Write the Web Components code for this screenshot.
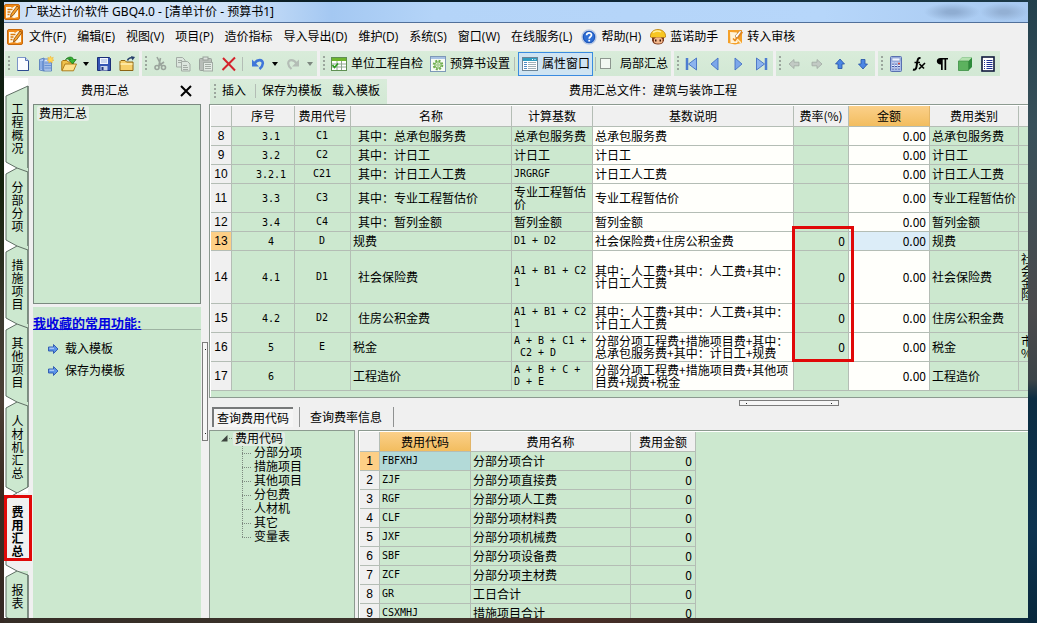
<!DOCTYPE html>
<html lang="zh-CN">
<head>
<meta charset="utf-8">
<title>广联达计价软件 GBQ4.0</title>
<style>
  html, body { height: 100%; }
  body {
    margin: 0; box-sizing: border-box; padding: 2px 9px 5px 4px; overflow: hidden;
    font: 12px/16px "Open Sans", "Noto Sans CJK SC", sans-serif; color: #000;
    background:
      linear-gradient(180deg, #0b1a14 0%, #16240e 30%, #3d3a30 52%, #4c4036 64%, #3a2a20 80%, #352a24 100%) 0 0 / 4px 100% no-repeat,
      linear-gradient(180deg, #22404c 0%, #38505a 20%, #4b4a4c 50%, #3c4448 61%, #0b2c42 64%, #0d3350 85%, #08283c 100%) 100% 0 / 9px 100% no-repeat,
      linear-gradient(90deg, #0a1a16, #0c2230 50%, #1c3a48) 0 0 / 100% 2px no-repeat,
      linear-gradient(90deg, #352d26, #3c342c 40%, #4a2e26 55%, #352c28 70%, #0b2a3e);
  }
</style>
</head>
<body>
<app-window></app-window>
<script>
const ICONS = {
  app: '<rect x=".5" y=".5" width="15" height="15" rx="1.5" fill="#f08a18" stroke="#c8690a"/><path d="M2 3h5l1 1 3-2 3 1v10l-4 1-3-1-5 1z" fill="#fff8e6"/><path d="M3.500 5.500h5M3.500 8h3M3.500 10.500h2" stroke="#d8780c" stroke-width="1.300"/><path d="M13 2 7 10l-.5 3 2.500-1.500L15 3.500z" fill="#f6a22c" stroke="#8a4200" stroke-width=".8"/>',
  help: '<circle cx="8" cy="8" r="7" fill="#2f6fd6" stroke="#b9c8e2" stroke-width="1.400"/><circle cx="8" cy="8" r="5.600" fill="none" stroke="#1b4fae" stroke-width=".8"/><path d="M5.600 6.300c0-3.300 4.900-3.100 4.900-.2 0 1.700-2.300 1.700-2.300 3.600" fill="none" stroke="#fff" stroke-width="1.700"/><rect x="7.300" y="10.800" width="1.800" height="1.700" fill="#fff"/>',
  kid: '<path d="M.5 8C0 3 4 .5 8 .5S16 3 15.500 8c-1 1.500-14 1.500-15 0z" fill="#f7c622" stroke="#b87c08" stroke-width=".8"/><path d="M3 3.500C5 1.500 9 1.500 11 3" stroke="#fff0a0" stroke-width="1.500" fill="none"/><path d="M2 8.500h12v3c-1 3-3 4-6 4s-5-1-6-4z" fill="#7b3a1c"/><path d="M4 10l2-1.500h5l1.500 2v2.500c-1 2-7.500 2-8.500 0z" fill="#f5b98c"/><rect x="5" y="10.500" width="1.500" height="2" fill="#401808"/><rect x="9.500" y="10.500" width="1.500" height="2" fill="#401808"/>',
  audit: '<path d="M1 1h14v13l-7 1.500L1 14z" fill="#f5a028"/><path d="M3 3l7 .5v3l-2 2.500 3 3-1 2H3.500z" fill="#fff3d8"/><path d="M6 9.500l2 2L15.500 3" stroke="#e8881c" stroke-width="1.600" fill="none"/><path d="M8 7l5-5.500 1.500 1L10 9z" fill="#fff" stroke="#a86820" stroke-width=".6"/><path d="m10 10 4 4" stroke="#fff0cc" stroke-width="1.400"/>',
  newdoc: '<path d="M2.500 1.500h8l3 3v10h-11z" fill="#fbfdff" stroke="#7c94c8"/><path d="M10.500 1.500v3h3" fill="#c6d6f0" stroke="#5674b4"/><path d="M13.500 5v9.500h-11" fill="none" stroke="#2e4c90"/>',
  building: '<path d="M1.500 3.500 6 2v13l-4.500-1z" fill="#a9c6f2" stroke="#4a72b8" stroke-width=".8"/><path d="M6 3h7.500v12H6z" fill="#d6e6fb" stroke="#4a72b8" stroke-width=".8"/><path d="M8 5v9M10 5v9M12 5v9M6.500 7h7M6.500 9.500h7M6.500 12h7M3 5v8M4.500 5v9" stroke="#5b86ce" stroke-width=".8"/><path d="m12.500 0 .8 2 2-.7-.8 2 1.500 1-2 .6.3 2-1.800-1.200-1.800 1.200.3-2-2-.6 1.600-1-.8-2 2 .7z" fill="#ffd659" stroke="#f0a818" stroke-width=".4"/>',
  open: '<path d="M.8 14.500V5.500l1-1h4l1.500 1.500h5v2" fill="#f0c24c" stroke="#a87410"/><path d="M1 14.800 4 8h11.500l-3 6.800z" fill="#ffe28c" stroke="#a87410" stroke-width=".9"/><path d="M4.500 3.500C7 .5 11.500 0 12.500 3.500h2.700L11.500 8 7.500 3.500h2.200C8.800 2.500 6.500 2.500 4.500 3.500z" fill="#37b534" stroke="#167012" stroke-width=".7"/>',
  save: '<path d="M1.500 1.500h12l1 1v12h-13z" fill="#3454b4" stroke="#1b2e78"/><rect x="4" y="2" width="8" height="6" fill="#f2f6ff"/><path d="M5 4h6M5 6h6" stroke="#9fb2dc"/><rect x="4.500" y="10" width="7" height="4.500" fill="#c9d4ec"/><rect x="5.500" y="11" width="2" height="3" fill="#20357e"/>',
  saveas: '<path d="M1 14.500v-9l1-1h4l1.500 1.500H14v8.500z" fill="#f7cf68" stroke="#8c6414"/><path d="M1.500 8h12" stroke="#ffefb4" stroke-width="1.500"/><path d="M8.500 4.500C9 2.500 11 1.500 13 2" fill="none" stroke="#28406c" stroke-width="1.500"/><path d="m12 0 4 1-2.500 3.500z" fill="#28406c"/>',
  cut: '<g fill="none" stroke="#9aa49c" stroke-width="1.600"><path d="M5 1l4.500 9M8.500 2 7 9"/><circle cx="5" cy="11.500" r="2"/><circle cx="11.500" cy="11.500" r="2"/><path d="M12 6 6.500 10"/></g>',
  copy: '<g fill="#dce6de" stroke="#a3aca5"><path d="M1.500 1.500h6l2.500 2.500v7H1.500z"/><path d="M6.500 5.500h6l2.500 2.500v7H6.500z"/><path d="M3 4.500h4M3 6.500h3M8 9.500h4M8 11.500h5M8 13.500h5" fill="none"/></g>',
  paste: '<rect x="1.500" y="2.500" width="12" height="12" rx="1" fill="#b8beb9" stroke="#9aa29c"/><rect x="5" y="1" width="5" height="3" fill="#dde3de" stroke="#979f99"/><rect x="5.500" y="6.500" width="9" height="8.500" fill="#e3eae4" stroke="#a3aca5"/><path d="M7 8.500h6M7 10.500h6M7 12.500h6" stroke="#a3aca5"/>',
  del: '<path d="m2 2 12 12.500M14 1.500 1.500 14" fill="none" stroke="#d4232c" stroke-width="2"/>',
  undo: '<path d="M4.500 7.500C7 3 13 3 12.800 7.500c-.1 2.500-1.500 4-3.300 5.500" fill="none" stroke="#3f76da" stroke-width="2.600"/><path d="M2 3.500v7h7z" fill="#3f76da"/>',
  redo: '<path d="M11.500 7.500C9 3 3 3 3.200 7.500c.1 2.500 1.500 4 3.300 5.500" fill="none" stroke="#b4bdb6" stroke-width="2.200"/><path d="M14 3.500v7H7z" fill="#b4bdb6"/>',
  check: '<rect x=".5" y="1.500" width="15" height="13" fill="#fff" stroke="#5f8f52"/><rect x="1" y="2" width="14" height="3" fill="#6fb62e"/><path d="M1 8h14M1 11h14M6 5v9M10.500 5v9" stroke="#8fa890"/><path d="m1.500 9 2 2.500 3.500-4" fill="none" stroke="#2b9c1c" stroke-width="1.600"/>',
  gear: '<rect x=".5" y=".5" width="15" height="15" fill="#f7fbf4" stroke="#7d98b8"/><path d="M1 2h14" stroke="#a8c2e4" stroke-width="2"/><circle cx="8" cy="9" r="4.300" fill="none" stroke="#6fae4e" stroke-width="2" stroke-dasharray="2 1.380"/><circle cx="8" cy="9" r="3.200" fill="#dff0d2" stroke="#6fae4e"/><circle cx="8" cy="9" r="1.200" fill="#fff" stroke="#6fae4e" stroke-width=".8"/>',
  props: '<rect x=".5" y="1.500" width="15" height="13" fill="#fff" stroke="#6c8496"/><rect x="1" y="2" width="14" height="3" fill="#2f9cc0"/><path d="M10 3.500h1M12.500 3.500h1" stroke="#fff"/><path d="M2 6.500h3M2 8.500h3M2 10.500h3M2 12.500h3" stroke="#4e8cc4"/><path d="M6 6.500h8M6 8.500h8M6 10.500h8M6 12.500h8" stroke="#9fb0b8"/>',
  first: '<path d="M3 2v12" stroke="#4e7ed0" stroke-width="2.500"/><path d="M12.500 2v12L4.500 8z" fill="#8db4ee" stroke="#4470c4" stroke-width=".9"/>',
  prev: '<path d="M11 2v12L4 8z" fill="#7ca7ea" stroke="#4470c4" stroke-width=".9"/>',
  next: '<path d="M5 2v12l7-6z" fill="#7ca7ea" stroke="#4470c4" stroke-width=".9"/>',
  last: '<path d="M13 2v12" stroke="#4e7ed0" stroke-width="2.500"/><path d="M3.500 2v12l8-6z" fill="#8db4ee" stroke="#4470c4" stroke-width=".9"/>',
  left: '<path d="M3 8l5-4.500v2.700h5v3.600H8v2.700z" fill="#c2cac4" stroke="#a0a8a2" stroke-width=".8"/>',
  right: '<path d="M13 8 8 3.500v2.700H3v3.600h5v2.700z" fill="#c2cac4" stroke="#a0a8a2" stroke-width=".8"/>',
  up: '<path d="M8 3l4.500 5H10v4.500H6V8H3.500z" fill="#4b86e4" stroke="#2450a4" stroke-width=".8"/>',
  down: '<path d="M8 13 3.500 8H6V3.500h4V8h2.500z" fill="#4b86e4" stroke="#2450a4" stroke-width=".8"/>',
  calc: '<rect x="2.500" y=".5" width="11" height="15" rx="1" fill="#a9bce8" stroke="#5870b0"/><rect x="4" y="2" width="8" height="3" fill="#eef4ff" stroke="#6a80bc" stroke-width=".6"/><path d="M4 7.500h8M4 10h8M4 12.500h8" stroke="#fff" stroke-width="1.500" stroke-dasharray="2 1"/><path d="M4 8h8M4 10.500h8M4 13h8" stroke="#4258a8" stroke-width="1" stroke-dasharray="2 1"/><path d="M10 7.500h2" stroke="#d4483c" stroke-width="1.500"/>',
  fx: '<path d="M9.500 2.500C7 1 6.500 4 6 7.500 5.500 12 5 14.500 2 13.500" fill="none" stroke="#000" stroke-width="2"/><path d="M3.500 6.500h5.500" stroke="#000" stroke-width="1.500"/><path d="m8.500 8 4.500 4.500M14 7l-6 6" stroke="#000" stroke-width="1.600"/>',
  para: '<path d="M14 2H6.500C1.500 2 1.500 8.500 7 8.500V14h1.700V3.500h1.800V14h1.700V3.500H14z" fill="#000"/>',
  cube: '<path d="M1.500 5 5 1.500h10V11l-3.500 3.500h-10z" fill="#2d8a3a"/><path d="M1.500 5 5 1.500h10L11.500 5z" fill="#b4e2b0"/><path d="M1.500 5h10v9.500h-10z" fill="#5cb25e" stroke="#3b8c42" stroke-width=".6"/>',
  list: '<rect x="2" y="1" width="12" height="14" fill="#fff" stroke="#111a3c" stroke-width="1.600"/><path d="M4 4.500h1M4 6.500h1M4 8.500h1M4 10.500h1M4 12.500h1" stroke="#1d2f90"/><path d="M6.500 4.500h6M6.500 6.500h6M6.500 8.500h6M6.500 10.500h6M6.500 12.500h6" stroke="#1d2f90"/>',
  go: '<path d="M3.500 6h5V3.500L13 8l-4.500 4.500V10h-5z" fill="#5b93e8" stroke="#2a55ae" stroke-width=".9"/><path d="M4.500 7.200H9" stroke="#c6dcfb"/>',
  close: '<path d="m3 3 10 10M13 3 3 13" stroke="#000" stroke-width="2" fill="none"/>'
};

/* Creates an element class whose shadow root is cloned from the given markup. */
function define(name, markup, setup) {
  const t = document.createElement('template');
  t.innerHTML = markup;
  customElements.define(name, class extends HTMLElement {
    constructor() { super(); this.attachShadow({ mode: 'open' }).append(t.content.cloneNode(true)); }
    connectedCallback() { if (setup) setup(this, this.shadowRoot); }
  });
}

define('ui-icon', `<style>:host{display:block;flex:none;width:16px;height:16px}svg{display:block;width:100%;height:100%}</style>
  <svg viewBox="0 0 16 16" aria-hidden="true"></svg>`,
  (el, r) => { r.querySelector('svg').innerHTML = ICONS[el.getAttribute('name')]; });

define('tool-button', `<style>
  :host{display:block;flex:none}
  button{display:flex;align-items:center;justify-content:center;gap:4px;box-sizing:border-box;height:24px;min-width:23px;margin:0;padding:0;border:0;background:none;font:inherit;color:inherit;white-space:nowrap}
  :host([text]) button{padding:0 2px 0 5px}
  :host([pressed]) button{border:1px solid #3a8be0;background:#cfe4f2;padding:0 2px 0 3px}
  </style><button type="button"><slot></slot></button>`,
  (el, r) => { const l = el.getAttribute('label'); if (l) r.querySelector('button').setAttribute('aria-label', l); });

define('tool-arrow', `<style>:host{display:block;flex:none}
  button{display:grid;place-items:center;width:12px;height:24px;padding:0;border:0;background:none;color:#000}
  :host([off]) button{color:#7d877f}
  i{border:3px solid transparent;border-top:4px solid;border-top-color:currentColor;border-bottom:0}</style>
  <button type="button" aria-label="更多"><i></i></button>`);

define('tool-sep', `<style>:host{display:block;flex:none;width:1px;height:14px;margin:0 3px 0 2px;background:#b3bdb5}</style>`);

define('tool-group', `<style>
  :host{display:flex;align-items:center;flex:none;height:25px;padding:0 1px 0 3px;background:linear-gradient(#d9ecda,#d2e8d4)}
  i{width:2px;height:15px;margin-right:1px;background:repeating-linear-gradient(#9ba69d 0 2px,transparent 2px 4px)}
  </style><i></i><slot></slot>`);

define('title-bar', `<style>
  :host{display:flex;align-items:center;gap:5px;box-sizing:border-box;height:21px;border-bottom:1px solid #51709a;
   font-family:"Noto Sans","Noto Sans CJK SC",sans-serif;
   background:radial-gradient(ellipse 28px 9px at 948px 10px,#8fadd2 20%,transparent),radial-gradient(ellipse 24px 9px at 1000px 10px,#93b0d4 20%,transparent),
   linear-gradient(90deg,#c3daf4 0,#dce9f8 5%,#cfe2f8 22%,#a4c8f2 32%,#b4d4f8 42%,#b6d6fa 80%,#a8c9f0)}
  h1{margin:0;font:inherit;white-space:pre}
  </style><ui-icon name="app"></ui-icon><h1>广联达计价软件 GBQ4.0 - [清单计价 - 预算书1]</h1>`);

define('menu-bar', `<style>
  :host{display:flex;align-items:center;gap:11px;height:28px;padding-left:3px;white-space:nowrap}
  button{display:flex;align-items:center;gap:4px;padding:0;border:0;background:none;font:inherit;color:inherit}
  ui-icon{margin-right:-5px}
  button ui-icon{margin-right:0}
  button:has(ui-icon){margin-left:-2px}
  </style>
  <ui-icon name="app"></ui-icon><button>文件(F)</button><button>编辑(E)</button><button>视图(V)</button><button>项目(P)</button>
  <button>造价指标</button><button>导入导出(D)</button><button>维护(D)</button><button>系统(S)</button><button>窗口(W)</button><button>在线服务(L)</button>
  <button><ui-icon name="help"></ui-icon>帮助(H)</button><button><ui-icon name="kid"></ui-icon>蓝诺助手</button><button><ui-icon name="audit"></ui-icon>转入审核</button>`);

const ib = (n, l) => `<tool-button label="${l}"><ui-icon name="${n}"></ui-icon></tool-button>`;
define('tool-bar', `<style>
  :host{display:flex;gap:3px;height:27px;padding-left:1px}
  label{display:flex;align-items:center;gap:9px;padding-right:2px;white-space:nowrap}
  input{appearance:none;width:11px;height:11px;margin:0 0 0 1px;border:1px solid #8d968f;background:#f2f8f2}
  </style>
  <tool-group>${ib('newdoc','新建')}${ib('building','新建项目')}${ib('open','打开')}<tool-arrow></tool-arrow>${ib('save','保存')}${ib('saveas','另存')}</tool-group>
  <tool-group>${ib('cut','剪切')}${ib('copy','复制')}${ib('paste','粘贴')}${ib('del','删除')}<tool-sep></tool-sep>${ib('undo','撤销')}<tool-arrow></tool-arrow>${ib('redo','恢复')}<tool-arrow off></tool-arrow></tool-group>
  <tool-group><tool-button text><ui-icon name="check"></ui-icon>单位工程自检</tool-button><tool-button text><ui-icon name="gear"></ui-icon>预算书设置</tool-button><tool-sep></tool-sep>
   <tool-button pressed><ui-icon name="props"></ui-icon>属性窗口</tool-button><tool-sep></tool-sep><label><input type="checkbox">局部汇总</label></tool-group>
  <tool-group>${ib('first','首条')}${ib('prev','上一条')}${ib('next','下一条')}${ib('last','末条')}</tool-group>
  <tool-group>${ib('left','升级')}${ib('right','降级')}${ib('up','上移')}${ib('down','下移')}</tool-group>
  <tool-group>${ib('calc','计算器')}${ib('fx','公式')}${ib('para','段落')}${ib('cube','图元')}${ib('list','列表')}</tool-group>`);

define('side-tab', `<style>
  :host{display:block;flex:none;position:relative;width:23px}
  svg{position:absolute;inset:0;overflow:visible}
  button{position:relative;display:grid;place-items:center;width:100%;height:100%;padding:0;border:0;background:none;font:inherit;line-height:13px;color:inherit}
  span{width:12px;word-break:break-all}
  :host([active]) span{font-weight:700}
  </style><svg width="23" aria-hidden="true"></svg><button type="button"><span><slot></slot></span></button>`,
  (el, r) => {
    const h = 26 + 13 * el.textContent.length, svg = r.querySelector('svg');
    el.style.height = h + 'px';
    svg.setAttribute('height', h);
    const on = el.hasAttribute('active'), first = el.hasAttribute('first'), end = el.hasAttribute('end');
    const fill = on ? '#f0f0f0' : '#cce8cf';
    const top = first ? '0,6 22,-4' : '0,6 11,0 22,0';
    const bottom = end ? `22,${h - 6} 11,${h} 0,${h - 6}` : `22,${h} 11,${h} 0,${h - 6}`;
    svg.innerHTML = `<polygon points="${top} ${bottom}" fill="${fill}"/>
      <polyline points="${end ? `22,${h - 6} ` : ''}11,${h} 0,${h - 6} 0,6 ${first ? '22,-4' : '11,0'}" fill="none" stroke="#5f6f64"/>
      ${first || on ? '' : '<path d="M11 0l11 4" stroke="#5f6f64"/>'}
      ${on ? '' : `<path d="M22 ${first ? -4 : 4}V${end ? h - 6 : h + 4}" stroke="#5f6f64" stroke-width="1.500"/>`}`;
  });

define('side-tabs', `<style>
  :host{display:flex;flex-direction:column;box-sizing:border-box;width:28px;padding:12px 0 0 2px;overflow:hidden;background:linear-gradient(90deg,#fff 24px,#f0f0f0 24px)}
  .wrap{position:relative;width:23px}
  .mark{position:absolute;left:-2px;top:2px;right:-3px;bottom:10px;border:3px solid #e00808;pointer-events:none}
  </style>
  <side-tab first>工程概况</side-tab><side-tab>分部分项</side-tab><side-tab>措施项目</side-tab><side-tab>其他项目</side-tab><side-tab end>人材机汇总</side-tab>
  <div class="wrap"><side-tab active>费用汇总</side-tab><div class="mark"></div></div><side-tab>报表</side-tab>`);

define('side-panel', `<style>
  :host{display:flex;flex-direction:column;min-height:0}
  header{display:flex;align-items:center;height:26px;padding-right:7px;flex:none}
  h2{flex:1;margin:0;font:inherit;text-align:center}
  button{padding:0;border:0;background:none}
  .tree{box-sizing:border-box;flex:none;height:200px;margin-left:1px;border:1px solid #7b8a80;background:#cce8cf;padding:1px 3px}
  .tree span{display:inline-block;padding:0 2px;background:#e6efe7;border-radius:2px;line-height:15px}
  .fav{flex:1;margin:3px 0 0 1px;background:#cce8cf;overflow:hidden}
  h3{margin:8px 0 8px;height:14px;border-bottom:1px solid #9db3a2;font:bold 13px/18px "Liberation Sans","Noto Sans CJK SC",sans-serif}
  h3 a{color:#0404e0;text-decoration:underline}
  .fav ul{list-style:none;margin:0;padding:0 0 0 12px}
  li a{display:flex;align-items:center;gap:4px;height:22px;color:#000;text-decoration:none}
  </style>
  <header><h2>费用汇总</h2><button type="button" aria-label="关闭"><ui-icon name="close"></ui-icon></button></header>
  <div class="tree"><span>费用汇总</span></div>
  <div class="fav"><h3><a href="#fav">我收藏的常用功能:</a></h3>
  <ul><li><a href="#load"><ui-icon name="go"></ui-icon>载入模板</a></li><li><a href="#save"><ui-icon name="go"></ui-icon>保存为模板</a></li></ul></div>`);

define('split-grip', `<style>
  :host{display:flex;flex-direction:column;justify-content:space-between;align-items:center;box-sizing:border-box;border:1px solid #7c7c7c;padding:6px 0;background:#f6f6f6}
  :host([wide]){flex-direction:row;padding:0 6px}
  i{width:1px;height:1px;background:#222}
  </style><i></i><i></i>`);

const TABLE_CSS = `
  table{border-collapse:separate;border-spacing:0;table-layout:fixed}
  th,td{box-sizing:border-box;padding:0 3px 0 2px;border:solid #b4bdb5;border-width:0 1px 1px 0;font-weight:400;line-height:12px;text-align:left;white-space:nowrap;overflow:hidden}
  td{background:#cce8cf}
  thead th{height:21px;padding:0;text-align:center;background:#f0f0f0}
  tbody th{padding:0;text-align:center;background:#f0f0f0;font-family:"Liberation Sans",sans-serif}
  thead th.on{background:linear-gradient(#fbd08a,#f2bd5f);border-right-color:#e2b568}
  tbody th.on{background:#fdcf86}
  .c{text-align:center}.r{text-align:right}
  .m{font:10px/12px "DejaVu Sans Mono",monospace}`;

/* Row fields: number, index, code, name, basis, description, rate, category, extra, height */
const ROWS = [
  [8,'3.1','C1','\u3000其中：总承包服务费','总承包服务费','总承包服务费','','总承包服务费','',19],
  [9,'3.2','C2','\u3000其中：计日工','计日工','计日工','','计日工','',19],
  [10,'3.2.1','C21','\u3000其中：计日工人工费','JRGRGF','计日工人工费','','计日工人工费','',19],
  [11,'3.3','C3','\u3000其中：专业工程暂估价','专业工程暂估<br>价','专业工程暂估价','','专业工程暂估价','',29],
  [12,'3.4','C4','\u3000其中：暂列金额','暂列金额','暂列金额','','暂列金额','',19],
  [13,'4','D','规费','D1 + D2','社会保险费+住房公积金费','0','规费','',19],
  [14,'4.1','D1','\u3000社会保险费','A1 + B1 + C2<br>1','其中：人工费+其中：人工费+其中：<br>计日工人工费','0','社会保险费','社<br>会<br>金<br>险',53],
  [15,'4.2','D2','\u3000住房公积金费','A1 + B1 + C2<br>1','其中：人工费+其中：人工费+其中：<br>计日工人工费','0','住房公积金费','',29],
  [16,'5','E','税金','A + B + C1 +<br>&nbsp;C2 + D','分部分项工程费+措施项目费+其中：<br>总承包服务费+其中：计日工+规费','0','税金','市<br>%',29],
  [17,'6','','工程造价','A + B + C +<br>D + E','分部分项工程费+措施项目费+其他项<br>目费+规费+税金','','工程造价','',29]
];
define('cost-grid', `<style>
  :host{display:block;position:relative;box-sizing:border-box;height:294px;border:1px solid #8c9a90;border-right:0;padding:1px 0 0 1px;overflow:hidden;
    background:linear-gradient(#fff,#fff) 0 0/1px 100% no-repeat,linear-gradient(#fff,#fff) 0 0/100% 1px no-repeat,#cce8cf;
    font-family:"Noto Sans CJK SC",sans-serif}
  ${TABLE_CSS}
  table{width:828px}
  .w{background:#fffffb}.sel{background:#dcedf8}
  .i{padding-left:19px;padding-top:1px}
  .n{padding-left:7px}
  .n.top{padding-left:2px}
  .mark{position:absolute;left:582px;top:121px;width:56px;height:130px;border:3px solid #e00808;pointer-events:none}
  </style>
  <table><colgroup><col style="width:21px"><col style="width:63px"><col style="width:56px"><col style="width:161px"><col style="width:81px"><col style="width:201px"><col style="width:55px"><col style="width:81px"><col style="width:89px"><col></colgroup>
  <thead><tr><th></th><th>序号</th><th>费用代号</th><th>名称</th><th>计算基数</th><th>基数说明</th><th>费率(%)</th><th class="on">金额</th><th>费用类别</th><th></th></tr></thead>
  <tbody>${ROWS.map(([n,i,c,name,b,d,rate,cat,x,h]) => `<tr style="height:${h}px"><th class="${n===13?'on':''}">${n}</th><td class="c m i">${i}</td><td class="c m">${c}</td>
   <td class="n${name[0]==='\u3000'?'':' top'}">${name.replace('\u3000','')}</td><td class="${/^[A-Z]/.test(b)?'m':''}">${b}</td><td class="w">${d}</td><td class="r">${rate}</td>
   <td class="r ${n===13?'sel':'w'}">0.00</td><td>${cat}</td><td>${x}</td></tr>`).join('')}</tbody></table>
  <div class="mark"></div>`);

const CODES = [['FBFXHJ','分部分项合计'],['ZJF','分部分项直接费'],['RGF','分部分项人工费'],['CLF','分部分项材料费'],['JXF','分部分项机械费'],['SBF','分部分项设备费'],['ZCF','分部分项主材费'],['GR','工日合计'],['CSXMHJ','措施项目合计']];
define('code-grid', `<style>
  :host{display:block;box-sizing:border-box;border:1px solid #8c9a90;border-width:1px 0 0 1px;padding:1px 0 0 1px;overflow:hidden;
    background:linear-gradient(#fff,#fff) 0 0/1px 100% no-repeat,linear-gradient(#fff,#fff) 0 0/100% 1px no-repeat,#cce8cf;font-family:"Noto Sans CJK SC",sans-serif}
  ${TABLE_CSS}
  thead th{height:20px}
  table{width:336px}
  tbody tr{height:19px}
  .cur{background:#b3dad8}
  </style>
  <table><colgroup><col style="width:20px"><col style="width:91px"><col style="width:160px"><col style="width:65px"></colgroup>
  <thead><tr><th></th><th class="on">费用代码</th><th>费用名称</th><th>费用金额</th></tr></thead>
  <tbody>${CODES.map(([c,n],k) => `<tr><th class="${k?'':'on'}">${k+1}</th><td class="m ${k?'':'cur'}">${c}</td><td>${n}</td><td class="r">0</td></tr>`).join('')}</tbody></table>`);

define('code-tree', `<style>
  :host{display:block;box-sizing:border-box;width:146px;border:1px solid #8c9a90;border-bottom:0;background:#cce8cf;overflow:hidden;line-height:14px}
  .root{display:flex;align-items:center;height:15px;padding-left:11px}
  svg{width:7px;height:7px}
  i{width:3px;margin:0 1px;border-top:1px dotted #7d8a80}
  .root span{padding:0 2px;border-radius:2px;background:#e2ece3}
  ul{list-style:none;margin:0 0 0 32px;padding:0;position:relative}
  ul::before{content:"";position:absolute;left:0;top:0;bottom:7px;border-left:1px dotted #7d8a80}
  li{display:flex;align-items:center;gap:3px;height:14px}
  li::before{content:"";width:9px;border-top:1px dotted #7d8a80}
  </style>
  <div class="root"><svg viewBox="0 0 7 7"><path d="M6.500 0v6.500H0z" fill="#3c443e"/></svg><i></i><span>费用代码</span></div>
  <ul><li>分部分项</li><li>措施项目</li><li>其他项目</li><li>分包费</li><li>人材机</li><li>其它</li><li>变量表</li></ul>`);

define('query-tabs', `<style>
  :host{display:flex;align-items:stretch;height:20px;padding-left:3px}
  button{padding:0;border:0;background:none;font:inherit;color:inherit;white-space:nowrap}
  .on{padding:2px 4px 0 3px;border:solid #77797a;border-width:2px 0 0 2px;background:#f5f5f5}
  .off{margin-left:6px;padding:2px 11px 0 10px;border:solid #8f9191;border-width:0 1px}
  </style><button type="button" class="on">查询费用代码</button><button type="button" class="off">查询费率信息</button>`);

define('app-window', `<style>
  :host{display:flex;flex-direction:column;height:100%;background:#f0f0f0;overflow:hidden}
  .body{flex:1;display:grid;grid-template-columns:28px 169px 8px minmax(0,1fr);min-height:0}
  .split{padding-left:1px}
  .split split-grip{width:6px;height:99px;margin-top:264px}
  main{display:flex;flex-direction:column;min-width:0;min-height:0}
  .cmd{display:flex;align-items:center;height:26px;padding-left:1px;flex:none;white-space:nowrap}
  .cmd tool-group{padding:0 5px 0 4px}
  .cmd tool-sep{margin:0 1px 0 7px}
  .cmd tool-sep ~ tool-button + tool-button{margin-left:3px}
  .cmd h2{margin:0 0 0 182px;font:inherit}
  .mid{display:flex;flex:none;height:9px;padding:2px 0 0 530px;box-sizing:border-box}
  .mid split-grip{width:100px;height:6px}
  query-tabs{flex:none}
  .low{flex:1;display:flex;gap:3px;min-height:0;margin-top:3px}
  .low code-tree{flex:none}
  .low code-grid{flex:1}
  </style>
  <title-bar></title-bar><menu-bar></menu-bar><tool-bar></tool-bar>
  <div class="body">
    <side-tabs></side-tabs><side-panel></side-panel><div class="split"><split-grip></split-grip></div>
    <main>
      <div class="cmd"><tool-group><tool-button text>插入</tool-button><tool-sep></tool-sep><tool-button text>保存为模板</tool-button><tool-button text>载入模板</tool-button></tool-group><h2>费用汇总文件：建筑与装饰工程</h2></div>
      <cost-grid></cost-grid>
      <div class="mid"><split-grip wide></split-grip></div>
      <query-tabs></query-tabs>
      <div class="low"><code-tree></code-tree><code-grid></code-grid></div>
    </main>
  </div>`);
</script>
</body>
</html>
